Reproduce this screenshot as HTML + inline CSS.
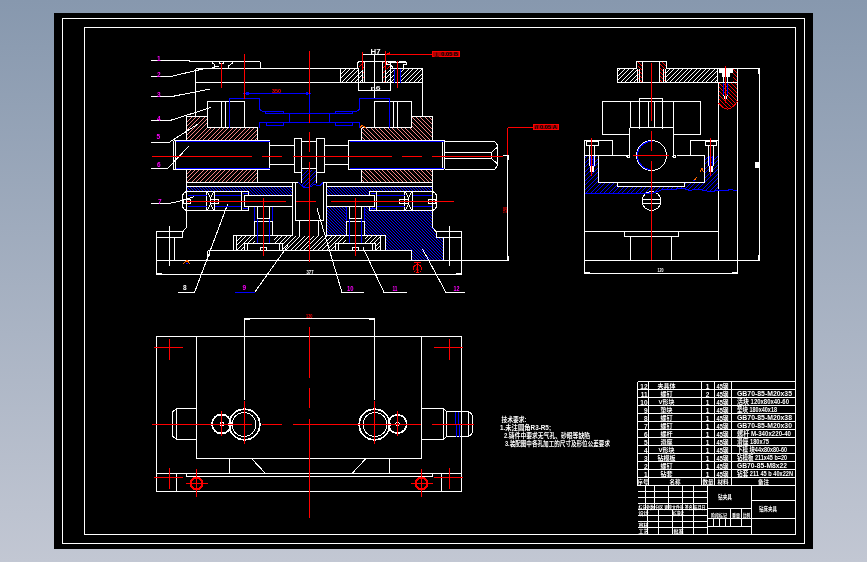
<!DOCTYPE html>
<html><head><meta charset="utf-8"><title>CAD</title>
<style>
html,body{margin:0;padding:0;width:867px;height:562px;overflow:hidden;background:linear-gradient(#8798ae,#c2c7d3)}
svg{position:absolute;left:0;top:0;display:block;will-change:transform;font-family:"Liberation Sans","Noto Sans CJK SC",sans-serif}
</style></head><body>
<svg width="867" height="562" viewBox="0 0 867 562" shape-rendering="crispEdges">
<defs>
<pattern id="hr" width="13" height="13" patternUnits="userSpaceOnUse"><path d="M0 0h1v1h-1zM4 0h1v1h-1zM9 0h1v1h-1zM3 1h1v1h-1zM8 1h1v1h-1zM12 1h1v1h-1zM2 2h1v1h-1zM7 2h1v1h-1zM11 2h1v1h-1zM1 3h1v1h-1zM6 3h1v1h-1zM10 3h1v1h-1zM0 4h1v1h-1zM5 4h1v1h-1zM9 4h1v1h-1zM4 5h1v1h-1zM8 5h1v1h-1zM12 5h1v1h-1zM3 6h1v1h-1zM7 6h1v1h-1zM11 6h1v1h-1zM2 7h1v1h-1zM6 7h1v1h-1zM10 7h1v1h-1zM1 8h1v1h-1zM5 8h1v1h-1zM9 8h1v1h-1zM0 9h1v1h-1zM4 9h1v1h-1zM8 9h1v1h-1zM3 10h1v1h-1zM7 10h1v1h-1zM12 10h1v1h-1zM2 11h1v1h-1zM6 11h1v1h-1zM11 11h1v1h-1zM1 12h1v1h-1zM5 12h1v1h-1zM10 12h1v1h-1z" fill="#f28484"/></pattern>
<pattern id="hrb" width="13" height="13" patternUnits="userSpaceOnUse"><path d="M0 0h1v1h-1zM4 0h1v1h-1zM9 0h1v1h-1zM1 1h1v1h-1zM5 1h1v1h-1zM10 1h1v1h-1zM2 2h1v1h-1zM6 2h1v1h-1zM11 2h1v1h-1zM3 3h1v1h-1zM7 3h1v1h-1zM12 3h1v1h-1zM0 4h1v1h-1zM4 4h1v1h-1zM8 4h1v1h-1zM1 5h1v1h-1zM5 5h1v1h-1zM9 5h1v1h-1zM2 6h1v1h-1zM6 6h1v1h-1zM10 6h1v1h-1zM3 7h1v1h-1zM7 7h1v1h-1zM11 7h1v1h-1zM4 8h1v1h-1zM8 8h1v1h-1zM12 8h1v1h-1zM0 9h1v1h-1zM5 9h1v1h-1zM9 9h1v1h-1zM1 10h1v1h-1zM6 10h1v1h-1zM10 10h1v1h-1zM2 11h1v1h-1zM7 11h1v1h-1zM11 11h1v1h-1zM3 12h1v1h-1zM8 12h1v1h-1zM12 12h1v1h-1z" fill="#f28484"/></pattern>
<pattern id="hR" width="4" height="4" patternUnits="userSpaceOnUse"><path d="M0 0h1v1h-1zM1 1h1v1h-1zM2 2h1v1h-1zM3 3h1v1h-1z" fill="#f00"/></pattern>
<pattern id="hRf" width="5" height="5" patternUnits="userSpaceOnUse"><path d="M0 0h1v1h-1zM4 1h1v1h-1zM3 2h1v1h-1zM2 3h1v1h-1zM1 4h1v1h-1z" fill="#f00"/></pattern>
<pattern id="hb" width="3" height="3" patternUnits="userSpaceOnUse"><path d="M0 0h1v1h-1zM1 1h1v1h-1zM2 2h1v1h-1z" fill="#00f"/></pattern>
<pattern id="hbf" width="9" height="9" patternUnits="userSpaceOnUse"><path d="M0 0h1v1h-1zM4 0h1v1h-1zM3 1h1v1h-1zM8 1h1v1h-1zM2 2h1v1h-1zM7 2h1v1h-1zM1 3h1v1h-1zM6 3h1v1h-1zM0 4h1v1h-1zM5 4h1v1h-1zM4 5h1v1h-1zM8 5h1v1h-1zM3 6h1v1h-1zM7 6h1v1h-1zM2 7h1v1h-1zM6 7h1v1h-1zM1 8h1v1h-1zM5 8h1v1h-1z" fill="#00f"/></pattern>
<pattern id="hw" width="9" height="9" patternUnits="userSpaceOnUse"><path d="M0 0h1v1h-1zM4 0h1v1h-1zM3 1h1v1h-1zM8 1h1v1h-1zM2 2h1v1h-1zM7 2h1v1h-1zM1 3h1v1h-1zM6 3h1v1h-1zM0 4h1v1h-1zM5 4h1v1h-1zM4 5h1v1h-1zM8 5h1v1h-1zM3 6h1v1h-1zM7 6h1v1h-1zM2 7h1v1h-1zM6 7h1v1h-1zM1 8h1v1h-1zM5 8h1v1h-1z" fill="#fff"/></pattern>
</defs>
<rect x="54" y="13" width="759" height="536" fill="#000"/>
<rect x="62.5" y="18.5" width="742" height="525" stroke="#fff" fill="none"/>
<rect x="84.5" y="27.5" width="711" height="507" stroke="#fff" fill="none"/>
<!--FRONT VIEW-->
<path d="M186.5 116.5 H207.5 V127.5 H257.5 V140.5 H186.5 Z" fill="url(#hr)" stroke="none"/>
<path d="M186.5 169.5 H257.5 V182.5 H186.5 Z" fill="url(#hr)" stroke="none"/>
<path d="M361.5 127.5 H411.5 V116.5 H432.5 V140.5 H361.5 Z" fill="url(#hrb)" stroke="none"/>
<path d="M361.5 169.5 H432.5 V182.5 H361.5 Z" fill="url(#hrb)" stroke="none"/>
<path d="M340.5 68.5 H358.5 V82.5 H340.5 Z" fill="url(#hw)" stroke="none"/>
<path d="M390.5 68.5 H394.5 V82.5 H390.5 Z" fill="url(#hw)" stroke="none"/>
<path d="M400.5 68.5 H422.5 V82.5 H400.5 Z" fill="url(#hw)" stroke="none"/>
<path d="M358.5 62 H364.5 V82.5 H362.5 V68.5 H358.5 Z" fill="url(#hRf)" stroke="none"/>
<path d="M358.5 68.5 H362.5 V82.5 H358.5 Z" fill="url(#hw)" stroke="none"/>
<path d="M382.5 62 H390 V68.5 H385.5 V82.5 H382.5 Z" fill="url(#hRf)" stroke="none"/>
<path d="M385.5 68.5 H390.5 V82.5 H385.5 Z" fill="url(#hw)" stroke="none"/>
<path d="M186.5 186.5 H292.5 V195.5 H248.5 V191.5 H186.5 Z" fill="url(#hb)" stroke="none"/>
<path d="M326.5 186.5 H432.5 V227.5 L436.5 231.5 V237.5 H443.5 V260.5 H411.5 V250.5 H385.5 V235.5 H364.5 V206.5 H374.5 V210.5 H432.5 V191.5 H369.5 V195.5 H326.5 Z" fill="url(#hb)" stroke="none"/>
<path d="M326.5 206.5 H346.5 V235.5 H326.5 Z" fill="url(#hb)" stroke="none"/>
<path d="M301.5 169.5 H316.5 V182.5 H323 L320 186 L314 184.5 L309.5 187.5 L304 187.5 L298.5 182.5 H301.5 Z" fill="url(#hbf)" stroke="none"/>
<path d="M236.5 235.5 H254.5 V243.5 H244.5 V250.5 H236.5 Z" fill="url(#hw)" stroke="none"/>
<path d="M273.5 235.5 H345.5 V243.5 H335.5 V250.5 H282.5 V243.5 H273.5 Z" fill="url(#hw)" stroke="none"/>
<path d="M364.5 235.5 H380.5 V250.5 H375.5 V243.5 H364.5 Z" fill="url(#hw)" stroke="none"/>
<line x1="151" y1="60.5" x2="189.5" y2="60.5" stroke="#fff" stroke-width="1"/>
<path d="M189 61.5 H258.5 Q260.5 61.5 260.5 63.5 V68.5" stroke="#fff" fill="none" stroke-width="1"/>
<path d="M212.5 61.5 V63 L214.5 64.5 V67 L210.5 68.5 M232.5 61.5 V63 L230.5 64.5 L228.5 66 V68 L230 68.5 M215 66.5 H219" stroke="#fff" fill="none" stroke-width="1"/>
<rect x="219.5" y="61.5" width="4.0" height="2.0" stroke="#fff" fill="none"/>
<line x1="195.5" y1="68.5" x2="358.5" y2="68.5" stroke="#fff" stroke-width="1"/>
<line x1="195.5" y1="82.5" x2="358.5" y2="82.5" stroke="#fff" stroke-width="1"/>
<line x1="195.5" y1="68.5" x2="195.5" y2="116.5" stroke="#fff" stroke-width="1"/>
<line x1="390.5" y1="68.5" x2="422.5" y2="68.5" stroke="#fff" stroke-width="1"/>
<line x1="390.5" y1="82.5" x2="422.5" y2="82.5" stroke="#fff" stroke-width="1"/>
<line x1="340.5" y1="68.5" x2="340.5" y2="82.5" stroke="#fff" stroke-width="1"/>
<line x1="422.5" y1="68.5" x2="422.5" y2="116.5" stroke="#fff" stroke-width="1"/>
<path d="M357.5 68.5 V64 Q357.5 61.5 360 61.5 H387.5 Q390.5 61.5 390.5 64 V68.5" stroke="#fff" fill="none" stroke-width="1"/>
<line x1="358.5" y1="68.5" x2="358.5" y2="90.5" stroke="#fff" stroke-width="1"/>
<line x1="390.5" y1="68.5" x2="390.5" y2="90.5" stroke="#fff" stroke-width="1"/>
<line x1="364.5" y1="61.5" x2="364.5" y2="82.5" stroke="#fff" stroke-width="1"/>
<line x1="382.5" y1="61.5" x2="382.5" y2="82.5" stroke="#fff" stroke-width="1"/>
<line x1="358.5" y1="90.5" x2="390.5" y2="90.5" stroke="#fff" stroke-width="1"/>
<line x1="374.5" y1="54" x2="374.5" y2="98.5" stroke="#fff" stroke-width="1"/>
<line x1="362.5" y1="54.5" x2="385.5" y2="54.5" stroke="#fff" stroke-width="1"/>
<text x="370.5" y="53.5" fill="#fff" font-size="7" text-anchor="start" font-weight="bold" textLength="10" lengthAdjust="spacingAndGlyphs">H7</text>
<text x="370.5" y="89.5" fill="#fff" font-size="6" text-anchor="start" font-weight="bold" textLength="10" lengthAdjust="spacingAndGlyphs">n6</text>
<path d="M386.5 64.5 V63.5 Q386.5 61.5 388.5 61.5 H395.5 L397.5 63.5 L399.5 61.5 H404.5 Q406.5 61.5 406.5 63.5 V64.5 H403.5 V68.5 M386.5 64.5 H390.5 L393.5 68.5" stroke="#fff" fill="none" stroke-width="1"/>
<line x1="388" y1="62.5" x2="396" y2="62.5" stroke="#fff" stroke-width="1"/>
<line x1="399" y1="62.5" x2="405.5" y2="62.5" stroke="#fff" stroke-width="1"/>
<line x1="358.5" y1="82.5" x2="390.5" y2="82.5" stroke="#fff" stroke-width="1"/>
<line x1="362.5" y1="68.5" x2="362.5" y2="82.5" stroke="#fff" stroke-width="1"/>
<line x1="385.5" y1="68.5" x2="385.5" y2="82.5" stroke="#fff" stroke-width="1"/>
<line x1="151" y1="76.5" x2="170.5" y2="76.5" stroke="#fff" stroke-width="1"/>
<line x1="170.5" y1="76.5" x2="205" y2="68.5" stroke="#fff" stroke-width="1"/>
<line x1="151" y1="96.5" x2="172" y2="96.5" stroke="#fff" stroke-width="1"/>
<line x1="172" y1="96.5" x2="210" y2="89" stroke="#fff" stroke-width="1"/>
<line x1="151" y1="120.5" x2="170" y2="120.5" stroke="#fff" stroke-width="1"/>
<line x1="170" y1="120.5" x2="211" y2="107.5" stroke="#fff" stroke-width="1"/>
<line x1="151" y1="142.5" x2="169" y2="142.5" stroke="#fff" stroke-width="1"/>
<line x1="169" y1="142.5" x2="198" y2="124" stroke="#fff" stroke-width="1"/>
<line x1="151" y1="168.5" x2="167.5" y2="168.5" stroke="#fff" stroke-width="1"/>
<line x1="167.5" y1="168.5" x2="189" y2="146" stroke="#fff" stroke-width="1"/>
<line x1="151" y1="203.5" x2="168" y2="203.5" stroke="#fff" stroke-width="1"/>
<path d="M168 203.5 Q180 202 194 196.5" stroke="#fff" fill="none" stroke-width="1"/>
<rect x="207.5" y="101.5" width="37.0" height="26.0" stroke="#fff" fill="none"/>
<line x1="221.5" y1="101.5" x2="221.5" y2="127.5" stroke="#fff" stroke-width="1"/>
<line x1="225.5" y1="101.5" x2="225.5" y2="127.5" stroke="#fff" stroke-width="1"/>
<rect x="374.5" y="101.5" width="37.0" height="26.0" stroke="#fff" fill="none"/>
<line x1="393.5" y1="101.5" x2="393.5" y2="127.5" stroke="#fff" stroke-width="1"/>
<line x1="397.5" y1="101.5" x2="397.5" y2="127.5" stroke="#fff" stroke-width="1"/>
<path d="M186.5 140.5 V116.5 H207.5" stroke="#fff" fill="none" stroke-width="1"/>
<line x1="186.5" y1="169.5" x2="186.5" y2="227.5" stroke="#fff" stroke-width="1"/>
<line x1="244.5" y1="127.5" x2="257.5" y2="127.5" stroke="#fff" stroke-width="1"/>
<line x1="257.5" y1="127.5" x2="257.5" y2="140.5" stroke="#fff" stroke-width="1"/>
<line x1="257.5" y1="169.5" x2="257.5" y2="182.5" stroke="#fff" stroke-width="1"/>
<line x1="361.5" y1="127.5" x2="374.5" y2="127.5" stroke="#fff" stroke-width="1"/>
<line x1="361.5" y1="127.5" x2="361.5" y2="140.5" stroke="#fff" stroke-width="1"/>
<line x1="361.5" y1="169.5" x2="361.5" y2="182.5" stroke="#fff" stroke-width="1"/>
<path d="M411.5 116.5 H432.5 V140.5" stroke="#fff" fill="none" stroke-width="1"/>
<line x1="432.5" y1="169.5" x2="432.5" y2="227.5" stroke="#fff" stroke-width="1"/>
<line x1="186.5" y1="182.5" x2="298.5" y2="182.5" stroke="#fff" stroke-width="1"/>
<line x1="323" y1="182.5" x2="432.5" y2="182.5" stroke="#fff" stroke-width="1"/>
<line x1="186.5" y1="186.5" x2="292.5" y2="186.5" stroke="#fff" stroke-width="1"/>
<line x1="326.5" y1="186.5" x2="432.5" y2="186.5" stroke="#fff" stroke-width="1"/>
<path d="M175 140.5 H269.5 V169.5 H175 Q173.5 169.5 173.5 168 V142 Q173.5 140.5 175 140.5" stroke="#fff" fill="none" stroke-width="1"/>
<line x1="175.5" y1="140.5" x2="175.5" y2="169.5" stroke="#fff" stroke-width="1"/>
<line x1="269.5" y1="145.5" x2="294.5" y2="145.5" stroke="#fff" stroke-width="1"/>
<line x1="269.5" y1="164.5" x2="294.5" y2="164.5" stroke="#fff" stroke-width="1"/>
<rect x="294.5" y="138.5" width="7.0" height="34.0" stroke="#fff" fill="none"/>
<rect x="316.5" y="138.5" width="8.0" height="34.0" stroke="#fff" fill="none"/>
<line x1="301.5" y1="141.5" x2="316.5" y2="141.5" stroke="#fff" stroke-width="1"/>
<line x1="301.5" y1="168.5" x2="316.5" y2="168.5" stroke="#fff" stroke-width="1"/>
<line x1="324.5" y1="145.5" x2="348.5" y2="145.5" stroke="#fff" stroke-width="1"/>
<line x1="324.5" y1="164.5" x2="348.5" y2="164.5" stroke="#fff" stroke-width="1"/>
<path d="M348.5 140.5 H443 Q444.5 140.5 444.5 142 V168 Q444.5 169.5 443 169.5 H348.5 Z" stroke="#fff" fill="none" stroke-width="1"/>
<line x1="442.5" y1="140.5" x2="442.5" y2="169.5" stroke="#fff" stroke-width="1"/>
<path d="M444.5 141.5 H494.5 L497.5 145 V165.5 L494.5 169.5 H444.5" stroke="#fff" fill="none" stroke-width="1"/>
<path d="M444.5 152.5 H491.5 V158.5 H444.5 M491.5 152.5 L497.5 147 M491.5 158.5 L497.5 164" stroke="#fff" fill="none" stroke-width="1"/>
<line x1="301.5" y1="172.5" x2="301.5" y2="182.5" stroke="#fff" stroke-width="1"/>
<line x1="316.5" y1="172.5" x2="316.5" y2="182.5" stroke="#fff" stroke-width="1"/>
<line x1="292.5" y1="182.5" x2="292.5" y2="235.5" stroke="#fff" stroke-width="1"/>
<line x1="295.5" y1="182.5" x2="295.5" y2="220.5" stroke="#fff" stroke-width="1"/>
<line x1="323.5" y1="182.5" x2="323.5" y2="220.5" stroke="#fff" stroke-width="1"/>
<line x1="326.5" y1="182.5" x2="326.5" y2="235.5" stroke="#fff" stroke-width="1"/>
<line x1="295.5" y1="220.5" x2="323.5" y2="220.5" stroke="#fff" stroke-width="1"/>
<line x1="299.5" y1="220.5" x2="299.5" y2="235.5" stroke="#fff" stroke-width="1"/>
<line x1="318.5" y1="220.5" x2="318.5" y2="235.5" stroke="#fff" stroke-width="1"/>
<path d="M186.5 191.5 H248.5 V195.5 M248.5 206.5 V210.5 H186.5 M186.5 191.5 Q182.5 193 182.5 196.5 V205.5 Q182.5 209 186.5 210.5" stroke="#fff" fill="none" stroke-width="1"/>
<rect x="183.5" y="199.5" width="7.0" height="4.0" stroke="#fff" fill="none"/>
<line x1="206.5" y1="191.5" x2="206.5" y2="210.5" stroke="#fff" stroke-width="1"/>
<line x1="214.5" y1="191.5" x2="214.5" y2="210.5" stroke="#fff" stroke-width="1"/>
<path d="M206.5 191.5 Q210.5 195 210.5 201 Q210.5 207 206.5 210.5 M214.5 191.5 Q210.5 195 210.5 201 Q210.5 207 214.5 210.5" stroke="#fff" fill="none" stroke-width="1"/>
<rect x="210.5" y="199.5" width="8.0" height="4.0" stroke="#fff" fill="none"/>
<line x1="241.5" y1="191.5" x2="241.5" y2="210.5" stroke="#fff" stroke-width="1"/>
<path d="M292.5 195.5 H244.5 V206.5 H292.5" stroke="#fff" fill="none" stroke-width="1"/>
<path d="M432.5 191.5 H369.5 V195.5 M369.5 206.5 V210.5 H432.5 M432.5 191.5 Q436.5 193 436.5 196.5 V205.5 Q436.5 209 432.5 210.5" stroke="#fff" fill="none" stroke-width="1"/>
<rect x="428.5" y="199.5" width="7.0" height="4.0" stroke="#fff" fill="none"/>
<line x1="404.5" y1="191.5" x2="404.5" y2="210.5" stroke="#fff" stroke-width="1"/>
<line x1="412.5" y1="191.5" x2="412.5" y2="210.5" stroke="#fff" stroke-width="1"/>
<path d="M404.5 191.5 Q408.5 195 408.5 201 Q408.5 207 404.5 210.5 M412.5 191.5 Q408.5 195 408.5 201 Q408.5 207 412.5 210.5" stroke="#fff" fill="none" stroke-width="1"/>
<rect x="399.5" y="199.5" width="9.0" height="4.0" stroke="#fff" fill="none"/>
<line x1="376.5" y1="191.5" x2="376.5" y2="210.5" stroke="#fff" stroke-width="1"/>
<path d="M326.5 195.5 H374.5 V206.5 H326.5" stroke="#fff" fill="none" stroke-width="1"/>
<path d="M257.5 206.5 V218.5 H269.5 V206.5" stroke="#fff" fill="none" stroke-width="1"/>
<rect x="254.5" y="221.5" width="18.0" height="14.0" stroke="#fff" fill="none"/>
<rect x="260.5" y="247.5" width="6.0" height="3.0" stroke="#fff" fill="none"/>
<path d="M349.5 206.5 V218.5 H361.5 V206.5" stroke="#fff" fill="none" stroke-width="1"/>
<rect x="346.5" y="221.5" width="18.0" height="14.0" stroke="#fff" fill="none"/>
<rect x="352.5" y="247.5" width="6.0" height="3.0" stroke="#fff" fill="none"/>
<path d="M233.5 250.5 V235.5 H254 M273 235.5 H292.5 M326.5 235.5 H346 M365 235.5 H385.5 V250.5" stroke="#fff" fill="none" stroke-width="1"/>
<line x1="236.5" y1="235.5" x2="236.5" y2="250.5" stroke="#fff" stroke-width="1"/>
<line x1="380.5" y1="235.5" x2="380.5" y2="250.5" stroke="#fff" stroke-width="1"/>
<path d="M244.5 250.5 V243.5 H282.5 V250.5 M247.5 243.5 V250.5 M279.5 243.5 V250.5" stroke="#fff" fill="none" stroke-width="1"/>
<path d="M335.5 250.5 V243.5 H375.5 V250.5 M338.5 243.5 V250.5 M372.5 243.5 V250.5" stroke="#fff" fill="none" stroke-width="1"/>
<line x1="207.5" y1="250.5" x2="411.5" y2="250.5" stroke="#fff" stroke-width="1"/>
<line x1="207.5" y1="250.5" x2="207.5" y2="260.5" stroke="#fff" stroke-width="1"/>
<line x1="209.5" y1="250.5" x2="209.5" y2="256" stroke="#fff" stroke-width="1"/>
<line x1="411.5" y1="250.5" x2="411.5" y2="260.5" stroke="#fff" stroke-width="1"/>
<path d="M186.5 227.5 L182.5 232" stroke="#fff" fill="none" stroke-width="1"/>
<path d="M432.5 227.5 L436.5 232" stroke="#fff" fill="none" stroke-width="1"/>
<rect x="156.5" y="231.5" width="26.0" height="6.0" stroke="#fff" fill="none"/>
<line x1="156.5" y1="237.5" x2="156.5" y2="274.5" stroke="#fff" stroke-width="1"/>
<line x1="174.5" y1="237.5" x2="174.5" y2="260.5" stroke="#fff" stroke-width="1"/>
<line x1="169.5" y1="226" x2="169.5" y2="265.5" stroke="#fff" stroke-width="1"/>
<rect x="436.5" y="231.5" width="25.0" height="6.0" stroke="#fff" fill="none"/>
<line x1="461.5" y1="237.5" x2="461.5" y2="274.5" stroke="#fff" stroke-width="1"/>
<line x1="443.5" y1="237.5" x2="443.5" y2="260.5" stroke="#fff" stroke-width="1"/>
<line x1="449.5" y1="226" x2="449.5" y2="265.5" stroke="#fff" stroke-width="1"/>
<line x1="156.5" y1="260.5" x2="508.5" y2="260.5" stroke="#fff" stroke-width="1"/>
<line x1="156.5" y1="274.5" x2="461.5" y2="274.5" stroke="#fff" stroke-width="1"/>
<line x1="156.5" y1="273.5" x2="162" y2="273.5" stroke="#fff" stroke-width="1"/>
<line x1="456" y1="273.5" x2="461.5" y2="273.5" stroke="#fff" stroke-width="1"/>
<line x1="507.5" y1="155.5" x2="507.5" y2="260.5" stroke="#fff" stroke-width="1"/>
<line x1="503" y1="155.5" x2="507.5" y2="155.5" stroke="#fff" stroke-width="1"/>
<line x1="508.5" y1="155" x2="508.5" y2="160" stroke="#fff" stroke-width="1"/>
<line x1="508.5" y1="256" x2="508.5" y2="260.5" stroke="#fff" stroke-width="1"/>
<line x1="227.5" y1="204.5" x2="194.5" y2="292.5" stroke="#fff" stroke-width="1"/>
<line x1="178" y1="292.5" x2="194.5" y2="292.5" stroke="#fff" stroke-width="1"/>
<line x1="288" y1="245.5" x2="254.5" y2="292.5" stroke="#fff" stroke-width="1"/>
<line x1="317" y1="208.5" x2="342" y2="292.5" stroke="#fff" stroke-width="1"/>
<line x1="342" y1="292.5" x2="364" y2="292.5" stroke="#fff" stroke-width="1"/>
<line x1="363" y1="247.5" x2="384" y2="292.5" stroke="#fff" stroke-width="1"/>
<line x1="384" y1="292.5" x2="407" y2="292.5" stroke="#fff" stroke-width="1"/>
<line x1="422.5" y1="249" x2="446" y2="292.5" stroke="#fff" stroke-width="1"/>
<line x1="446" y1="292.5" x2="465" y2="292.5" stroke="#fff" stroke-width="1"/>
<text x="306.5" y="273.8" fill="#fff" font-size="4.5" text-anchor="start" font-weight="bold" textLength="7" lengthAdjust="spacingAndGlyphs">377</text>
<line x1="244.5" y1="93.5" x2="309.5" y2="93.5" stroke="#00f" stroke-width="1"/>
<line x1="309.5" y1="93.5" x2="309.5" y2="113.5" stroke="#00f" stroke-width="1"/>
<path d="M244.5 93.5 L248 92.5 L248 94.5 Z" stroke="#00f" fill="#00f" stroke-width="1"/>
<path d="M309.5 93.5 L306 92.5 L306 94.5 Z" stroke="#00f" fill="#00f" stroke-width="1"/>
<path d="M229.5 127.5 V98.5 H259.5 V108 Q259.5 111.5 265.5 111.5 H283.5 V113.5 H335.5 V111.5 H353 Q359.5 111.5 359.5 108 V98.5 H389.5 V127.5" stroke="#00f" fill="none" stroke-width="1"/>
<path d="M265.5 111.5 V113.5 H283.5 M335.5 113.5 H352.5 V111.5" stroke="#00f" fill="none" stroke-width="1"/>
<line x1="289.5" y1="113.5" x2="289.5" y2="122.5" stroke="#00f" stroke-width="1"/>
<line x1="329.5" y1="113.5" x2="329.5" y2="122.5" stroke="#00f" stroke-width="1"/>
<path d="M259.5 128 V122.5 H359.5 V128" stroke="#00f" fill="none" stroke-width="1"/>
<path d="M266.5 122.5 V125.5 H283.5 V122.5 M335.5 122.5 V125.5 H352.5 V122.5" stroke="#00f" fill="none" stroke-width="1"/>
<line x1="175.5" y1="141.5" x2="269.5" y2="141.5" stroke="#00f" stroke-width="1"/>
<line x1="175.5" y1="168.5" x2="269.5" y2="168.5" stroke="#00f" stroke-width="1"/>
<line x1="349.5" y1="141.5" x2="444" y2="141.5" stroke="#00f" stroke-width="1"/>
<line x1="349.5" y1="168.5" x2="444" y2="168.5" stroke="#00f" stroke-width="1"/>
<path d="M298.5 182.5 L304 187.5 L309.5 187.5 L314 184.5 L320 186 L323 182.5" stroke="#00f" fill="none" stroke-width="1"/>
<line x1="187.5" y1="195.5" x2="206.5" y2="195.5" stroke="#00f" stroke-width="1"/>
<line x1="214.5" y1="195.5" x2="241" y2="195.5" stroke="#00f" stroke-width="1"/>
<line x1="187.5" y1="206.5" x2="206.5" y2="206.5" stroke="#00f" stroke-width="1"/>
<line x1="214.5" y1="206.5" x2="241" y2="206.5" stroke="#00f" stroke-width="1"/>
<line x1="243" y1="193.5" x2="248" y2="193.5" stroke="#00f" stroke-width="1"/>
<line x1="243" y1="208.5" x2="248" y2="208.5" stroke="#00f" stroke-width="1"/>
<line x1="377" y1="195.5" x2="404.5" y2="195.5" stroke="#00f" stroke-width="1"/>
<line x1="412.5" y1="195.5" x2="431.5" y2="195.5" stroke="#00f" stroke-width="1"/>
<line x1="377" y1="206.5" x2="404.5" y2="206.5" stroke="#00f" stroke-width="1"/>
<line x1="412.5" y1="206.5" x2="431.5" y2="206.5" stroke="#00f" stroke-width="1"/>
<line x1="371" y1="193.5" x2="376" y2="193.5" stroke="#00f" stroke-width="1"/>
<line x1="371" y1="208.5" x2="376" y2="208.5" stroke="#00f" stroke-width="1"/>
<line x1="254.5" y1="206.5" x2="254.5" y2="220.5" stroke="#00f" stroke-width="1"/>
<line x1="272.5" y1="206.5" x2="272.5" y2="220.5" stroke="#00f" stroke-width="1"/>
<line x1="257.5" y1="218.5" x2="257.5" y2="243" stroke="#00f" stroke-width="1"/>
<line x1="269.5" y1="218.5" x2="269.5" y2="243" stroke="#00f" stroke-width="1"/>
<line x1="346.5" y1="206.5" x2="346.5" y2="220.5" stroke="#00f" stroke-width="1"/>
<line x1="364.5" y1="206.5" x2="364.5" y2="220.5" stroke="#00f" stroke-width="1"/>
<line x1="349.5" y1="218.5" x2="349.5" y2="243" stroke="#00f" stroke-width="1"/>
<line x1="361.5" y1="218.5" x2="361.5" y2="243" stroke="#00f" stroke-width="1"/>
<line x1="394.5" y1="68.5" x2="394.5" y2="82.5" stroke="#00f" stroke-width="1"/>
<line x1="400.5" y1="68.5" x2="400.5" y2="82.5" stroke="#00f" stroke-width="1"/>
<line x1="235" y1="292.5" x2="254.5" y2="292.5" stroke="#00f" stroke-width="1"/>
<line x1="221.5" y1="62.5" x2="221.5" y2="88" stroke="#f00" stroke-width="1"/>
<line x1="244.5" y1="54" x2="244.5" y2="98.5" stroke="#f00" stroke-width="1"/>
<line x1="309.5" y1="51" x2="309.5" y2="93.5" stroke="#f00" stroke-width="1"/>
<line x1="309.5" y1="113.5" x2="309.5" y2="122.5" stroke="#f00" stroke-width="1"/>
<line x1="309.5" y1="132" x2="309.5" y2="152" stroke="#f00" stroke-width="1"/>
<line x1="309.5" y1="162" x2="309.5" y2="262" stroke="#f00" stroke-width="1"/>
<line x1="362.5" y1="52" x2="362.5" y2="69.5" stroke="#f00" stroke-width="1"/>
<line x1="385.5" y1="51" x2="385.5" y2="69.5" stroke="#f00" stroke-width="1"/>
<line x1="397.5" y1="61" x2="397.5" y2="87.5" stroke="#f00" stroke-width="1"/>
<line x1="385.5" y1="54.5" x2="432.5" y2="54.5" stroke="#f00" stroke-width="1"/>
<path d="M385.5 54.5 L389 53.2 L389 54.5 Z" stroke="#f00" fill="#f00" stroke-width="1"/>
<rect x="432.5" y="51.5" width="27" height="5" fill="#f00" fill-opacity="0.7" stroke="#f00"/>
<text x="434" y="56" fill="#000" font-size="5" text-anchor="start" font-weight="bold" textLength="24" lengthAdjust="spacingAndGlyphs">⊥ 0.05 B</text>
<line x1="152" y1="156.5" x2="252" y2="156.5" stroke="#f00" stroke-width="1"/>
<line x1="262" y1="156.5" x2="282" y2="156.5" stroke="#f00" stroke-width="1"/>
<line x1="292.5" y1="156.5" x2="391.5" y2="156.5" stroke="#f00" stroke-width="1"/>
<line x1="402" y1="156.5" x2="421.5" y2="156.5" stroke="#f00" stroke-width="1"/>
<line x1="432" y1="156.5" x2="503" y2="156.5" stroke="#f00" stroke-width="1"/>
<line x1="186.5" y1="201.5" x2="286" y2="201.5" stroke="#f00" stroke-width="1"/>
<line x1="296" y1="201.5" x2="316" y2="201.5" stroke="#f00" stroke-width="1"/>
<line x1="331" y1="201.5" x2="454" y2="201.5" stroke="#f00" stroke-width="1"/>
<line x1="263.5" y1="198" x2="263.5" y2="255.5" stroke="#f00" stroke-width="1"/>
<line x1="355.5" y1="198" x2="355.5" y2="255.5" stroke="#f00" stroke-width="1"/>
<line x1="507.5" y1="127.5" x2="507.5" y2="154.5" stroke="#f00" stroke-width="1"/>
<line x1="507.5" y1="127.5" x2="533.5" y2="127.5" stroke="#f00" stroke-width="1"/>
<rect x="533.5" y="124.5" width="25" height="5" fill="#f00" fill-opacity="0.7" stroke="#f00"/>
<text x="535" y="129" fill="#000" font-size="5" text-anchor="start" font-weight="bold" textLength="22" lengthAdjust="spacingAndGlyphs">// 0.05 A</text>
<text x="503.5" y="210" fill="#f00" font-size="4.5" text-anchor="start" font-weight="bold" textLength="6" lengthAdjust="spacingAndGlyphs" transform="rotate(-90 506.5 210)">150</text>
<text x="272" y="92.7" fill="#f00" font-size="5" text-anchor="start" font-weight="bold" textLength="9" lengthAdjust="spacingAndGlyphs">350</text>
<circle cx="417.5" cy="268.5" r="4" stroke="#f00" fill="none" stroke-width="1"/>
<line x1="414" y1="262.5" x2="421" y2="262.5" stroke="#f00" stroke-width="1"/>
<line x1="417.5" y1="262.5" x2="417.5" y2="273" stroke="#f00" stroke-width="1"/>
<text x="415.6" y="270.5" fill="#f00" font-size="5" text-anchor="start">A</text>
<path d="M183 264 L187 260.5 L190 264" stroke="#f60" fill="none" stroke-width="1"/>
<line x1="186" y1="263.5" x2="188" y2="263.5" stroke="#00f" stroke-width="1"/>
<path d="M360 128 L362 125 L366 128" stroke="#f60" fill="none" stroke-width="1"/>
<text x="157" y="61" fill="#f0f" font-size="6.5" text-anchor="start" font-weight="bold">1</text>
<text x="157" y="77" fill="#f0f" font-size="6.5" text-anchor="start" font-weight="bold">2</text>
<text x="157" y="97" fill="#f0f" font-size="6.5" text-anchor="start" font-weight="bold">3</text>
<text x="157" y="121" fill="#f0f" font-size="6.5" text-anchor="start" font-weight="bold">4</text>
<text x="156.5" y="138.5" fill="#f0f" font-size="6.5" text-anchor="start" font-weight="bold">5</text>
<text x="157" y="167" fill="#f0f" font-size="6.5" text-anchor="start" font-weight="bold">6</text>
<text x="158" y="203.5" fill="#f0f" font-size="6.5" text-anchor="start" font-weight="bold">7</text>
<text x="183" y="290" fill="#fff" font-size="6.5" text-anchor="start" font-weight="bold">8</text>
<text x="242.5" y="290" fill="#f0f" font-size="6.5" text-anchor="start" font-weight="bold">9</text>
<text x="347" y="290.5" fill="#f0f" font-size="6.5" text-anchor="start" font-weight="bold" textLength="6.5" lengthAdjust="spacingAndGlyphs">10</text>
<text x="392.5" y="290.5" fill="#f0f" font-size="6.5" text-anchor="start" font-weight="bold" textLength="5" lengthAdjust="spacingAndGlyphs">11</text>
<text x="453.5" y="290.5" fill="#f0f" font-size="6.5" text-anchor="start" font-weight="bold" textLength="6" lengthAdjust="spacingAndGlyphs">12</text>
<!--SIDE VIEW-->
<path d="M617.5 68.5 H637.5 V82.5 H617.5 Z" fill="url(#hw)" stroke="none"/>
<path d="M665.5 68.5 H717.5 V82.5 H665.5 Z" fill="url(#hw)" stroke="none"/>
<path d="M637.5 62 H642.5 V82.5 H637.5 Z" fill="url(#hR)" stroke="none"/>
<path d="M659.5 62 H665.5 V82.5 H659.5 Z" fill="url(#hR)" stroke="none"/>
<path d="M733 68.5 H737.5 V82.5 H733 Z" fill="url(#hR)" stroke="none"/>
<path d="M718.5 82.5 H737.5 V101 Q728 116 718.5 103 Z" fill="url(#hR)" stroke="none"/>
<path d="M584.5 155.5 H598.5 V182.5 H617.5 V186.5 H684.5 V182.5 H704.5 V155.5 H718.5 V190 L712 192 L705 190.5 L697 189 L690 190.5 L682 188 L672 190 L664 189 L656 192 L651 193.5 H584.5 Z" fill="url(#hbf)" stroke="none"/>
<path d="M636.5 68.5 H617.5 V82.5 H737.5 V68.5 H666.5" stroke="#fff" fill="none" stroke-width="1"/>
<path d="M636.5 68.5 V61.5 H666.5 V68.5" stroke="#fff" fill="none" stroke-width="1"/>
<line x1="637.5" y1="68.5" x2="637.5" y2="82.5" stroke="#fff" stroke-width="1"/>
<line x1="639.5" y1="68.5" x2="639.5" y2="82.5" stroke="#fff" stroke-width="1"/>
<line x1="642.5" y1="61.5" x2="642.5" y2="82.5" stroke="#fff" stroke-width="1"/>
<line x1="659.5" y1="61.5" x2="659.5" y2="82.5" stroke="#fff" stroke-width="1"/>
<line x1="663.5" y1="68.5" x2="663.5" y2="82.5" stroke="#fff" stroke-width="1"/>
<line x1="665.5" y1="68.5" x2="665.5" y2="82.5" stroke="#fff" stroke-width="1"/>
<line x1="717.5" y1="68.5" x2="717.5" y2="82.5" stroke="#fff" stroke-width="1"/>
<path d="M719 69.5 H732 V72 H719 Z M722 72 V76 H729 V72 M723.5 76 V82.5 M727.5 76 V82.5" stroke="#fff" fill="#fff" stroke-width="1"/>
<line x1="737.5" y1="68.5" x2="759.5" y2="68.5" stroke="#fff" stroke-width="1"/>
<line x1="759.5" y1="68.5" x2="759.5" y2="260.5" stroke="#fff" stroke-width="1"/>
<line x1="758.5" y1="68.5" x2="758.5" y2="74" stroke="#fff" stroke-width="1"/>
<line x1="758.5" y1="255" x2="758.5" y2="260.5" stroke="#fff" stroke-width="1"/>
<rect x="755.5" y="162.5" width="3.0" height="4.5" stroke="#fff" fill="#fff"/>
<line x1="737.5" y1="82.5" x2="737.5" y2="273.5" stroke="#fff" stroke-width="1"/>
<line x1="718.5" y1="82.5" x2="718.5" y2="260.5" stroke="#fff" stroke-width="1"/>
<path d="M723.5 95 L725.5 100 L727.5 95" stroke="#fff" fill="none" stroke-width="1"/>
<path d="M629.5 134.5 H602.5 V101.5 H700.5 V134.5 H673.5" stroke="#fff" fill="none" stroke-width="1"/>
<line x1="630.5" y1="101.5" x2="630.5" y2="127.5" stroke="#fff" stroke-width="1"/>
<line x1="673.5" y1="101.5" x2="673.5" y2="127.5" stroke="#fff" stroke-width="1"/>
<path d="M639.5 128.5 V98.5 H662.5 V128.5" stroke="#fff" fill="none" stroke-width="1"/>
<line x1="648.5" y1="101.5" x2="648.5" y2="127.5" stroke="#fff" stroke-width="1"/>
<line x1="654.5" y1="101.5" x2="654.5" y2="127.5" stroke="#fff" stroke-width="1"/>
<line x1="629.5" y1="127.5" x2="673.5" y2="127.5" stroke="#fff" stroke-width="1"/>
<line x1="629.5" y1="127.5" x2="629.5" y2="155" stroke="#fff" stroke-width="1"/>
<line x1="673.5" y1="127.5" x2="673.5" y2="155" stroke="#fff" stroke-width="1"/>
<circle cx="628.5" cy="156.5" r="1.5" stroke="#fff" fill="none" stroke-width="1"/>
<circle cx="674.5" cy="156.5" r="1.5" stroke="#fff" fill="none" stroke-width="1"/>
<circle cx="651.5" cy="155.5" r="15" stroke="#fff" fill="none" stroke-width="1"/>
<path d="M584.5 273.5 V140.5 H612.5 V155.5" stroke="#fff" fill="none" stroke-width="1"/>
<line x1="584.5" y1="155.5" x2="627" y2="155.5" stroke="#fff" stroke-width="1"/>
<line x1="677" y1="155.5" x2="704.5" y2="155.5" stroke="#fff" stroke-width="1"/>
<path d="M690.5 155.5 V140.5 H718.5" stroke="#fff" fill="none" stroke-width="1"/>
<path d="M598.5 155.5 V182.5 H704.5 V155.5" stroke="#fff" fill="none" stroke-width="1"/>
<path d="M617.5 182.5 V186.5 H684.5 V182.5" stroke="#fff" fill="none" stroke-width="1"/>
<rect x="586.5" y="141.5" width="12.0" height="4.0" stroke="#fff" fill="none"/>
<line x1="589.0" y1="145.5" x2="589.0" y2="166" stroke="#fff" stroke-width="1"/>
<line x1="594.5" y1="145.5" x2="594.5" y2="166" stroke="#fff" stroke-width="1"/>
<rect x="590.5" y="166.5" width="3.0" height="4.5" stroke="#fff" fill="#fff"/>
<rect x="705.5" y="141.5" width="11.0" height="4.0" stroke="#fff" fill="none"/>
<line x1="708.0" y1="145.5" x2="708.0" y2="166" stroke="#fff" stroke-width="1"/>
<line x1="713.5" y1="145.5" x2="713.5" y2="166" stroke="#fff" stroke-width="1"/>
<rect x="709.5" y="166.5" width="3.0" height="4.5" stroke="#fff" fill="#fff"/>
<circle cx="651.5" cy="201" r="9.5" stroke="#fff" fill="none" stroke-width="1"/>
<line x1="642.5" y1="199.5" x2="660.5" y2="199.5" stroke="#fff" stroke-width="1"/>
<line x1="642.5" y1="203.5" x2="660.5" y2="203.5" stroke="#fff" stroke-width="1"/>
<line x1="584.5" y1="231.5" x2="718.5" y2="231.5" stroke="#fff" stroke-width="1"/>
<path d="M624.5 231.5 V236.5 H678.5 V231.5 M630.5 236.5 V260.5 M671.5 236.5 V260.5" stroke="#fff" fill="none" stroke-width="1"/>
<line x1="584.5" y1="260.5" x2="759.5" y2="260.5" stroke="#fff" stroke-width="1"/>
<line x1="584.5" y1="273.5" x2="737.5" y2="273.5" stroke="#fff" stroke-width="1"/>
<line x1="584.5" y1="272.5" x2="590" y2="272.5" stroke="#fff" stroke-width="1"/>
<line x1="732" y1="272.5" x2="737.5" y2="272.5" stroke="#fff" stroke-width="1"/>
<text x="657.5" y="272.3" fill="#fff" font-size="4.5" text-anchor="start" font-weight="bold" textLength="6" lengthAdjust="spacingAndGlyphs">120</text>
<path d="M653 141.5 A14 14 0 0 0 650 169.5" stroke="#00f" fill="none" stroke-width="1.2"/>
<path d="M584.5 193.5 H651 L656 192 L664 189 L672 190 L682 188 L690 190.5 L697 189 L705 190.5 L712 192 L718.5 190 L726 190.5 L731 189.5 L737 191" stroke="#00f" fill="none" stroke-width="1"/>
<line x1="590.5" y1="155.5" x2="590.5" y2="166" stroke="#00f" stroke-width="1"/>
<line x1="593.5" y1="155.5" x2="593.5" y2="166" stroke="#00f" stroke-width="1"/>
<line x1="709.5" y1="155.5" x2="709.5" y2="166" stroke="#00f" stroke-width="1"/>
<line x1="712.5" y1="155.5" x2="712.5" y2="166" stroke="#00f" stroke-width="1"/>
<line x1="723.5" y1="82.5" x2="723.5" y2="95" stroke="#00f" stroke-width="1"/>
<line x1="727.5" y1="82.5" x2="727.5" y2="95" stroke="#00f" stroke-width="1"/>
<line x1="651.5" y1="63" x2="651.5" y2="120.5" stroke="#f00" stroke-width="1"/>
<line x1="651.5" y1="131" x2="651.5" y2="150.5" stroke="#f00" stroke-width="1"/>
<line x1="651.5" y1="160.5" x2="651.5" y2="260" stroke="#f00" stroke-width="1"/>
<line x1="632.5" y1="155.5" x2="668.5" y2="155.5" stroke="#f00" stroke-width="1"/>
<line x1="591.5" y1="138" x2="591.5" y2="176" stroke="#f00" stroke-width="1"/>
<line x1="710.5" y1="138" x2="710.5" y2="176" stroke="#f00" stroke-width="1"/>
<line x1="725.5" y1="65.5" x2="725.5" y2="103" stroke="#f00" stroke-width="1"/>
<path d="M718.5 103 Q728 116 737.5 101" stroke="#f00" fill="none" stroke-width="1"/>
<path d="M694 181 L697 177 M700 172 L702 168 L703.5 172" stroke="#f60" fill="none" stroke-width="1"/>
<path d="M692.5 180 H695" stroke="#00f" fill="none" stroke-width="1"/>
<!--TOP VIEW-->
<rect x="156.5" y="336.5" width="305.0" height="155.0" stroke="#fff" fill="none"/>
<path d="M196.5 336.5 V458.5 H421.5 V336.5" stroke="#fff" fill="none" stroke-width="1"/>
<path d="M244.5 400 V318.5 H374.5 V400" stroke="#fff" fill="none" stroke-width="1"/>
<line x1="244.5" y1="319.5" x2="250" y2="319.5" stroke="#fff" stroke-width="1"/>
<line x1="369" y1="319.5" x2="374.5" y2="319.5" stroke="#fff" stroke-width="1"/>
<line x1="156.5" y1="473.5" x2="461.5" y2="473.5" stroke="#fff" stroke-width="1"/>
<path d="M186.5 473.5 V476.5 H432.5 V473.5" stroke="#fff" fill="none" stroke-width="1"/>
<line x1="176.5" y1="473.5" x2="176.5" y2="491.5" stroke="#fff" stroke-width="1"/>
<line x1="441.5" y1="473.5" x2="441.5" y2="491.5" stroke="#fff" stroke-width="1"/>
<line x1="229.5" y1="458.5" x2="229.5" y2="473.5" stroke="#fff" stroke-width="1"/>
<line x1="389.5" y1="458.5" x2="389.5" y2="473.5" stroke="#fff" stroke-width="1"/>
<line x1="251.5" y1="458.5" x2="265.5" y2="473.5" stroke="#fff" stroke-width="1"/>
<line x1="366" y1="458.5" x2="352" y2="473.5" stroke="#fff" stroke-width="1"/>
<path d="M196.5 408.5 H176.5 L172.5 412 V436 L176.5 439.5 H196.5 M176.5 408.5 V439.5" stroke="#fff" fill="none" stroke-width="1"/>
<path d="M421.5 408.5 H443.5 V439.5 H421.5 M443.5 408.5 L446.5 411.5 H468 Q472.5 413 472.5 418 V430 Q472.5 435 468 436.5 H446.5 L443.5 439.5 M446.5 411.5 V436.5 M468.5 411.5 V436.5" stroke="#fff" fill="none" stroke-width="1"/>
<circle cx="244.5" cy="424.5" r="15.3" stroke="#fff" fill="none" stroke-width="1.7"/>
<circle cx="244" cy="424.5" r="12" stroke="#fff" fill="none" stroke-width="1"/>
<circle cx="221.5" cy="424" r="9.5" stroke="#fff" fill="none" stroke-width="1.7"/>
<rect x="220" y="422.5" width="3" height="3.0" stroke="#fff" fill="none"/>
<circle cx="374.5" cy="424.5" r="15.3" stroke="#fff" fill="none" stroke-width="1.7"/>
<circle cx="375" cy="424.5" r="12" stroke="#fff" fill="none" stroke-width="1"/>
<circle cx="397.5" cy="424" r="9.2" stroke="#fff" fill="none" stroke-width="1.7"/>
<ellipse cx="397.5" cy="424" rx="2" ry="1.5" stroke="#fff" fill="none"/>
<path d="M455.5 411.5 V423 L456.5 425 V436.5 M458.5 411.5 V423 L459.5 425 V436.5" stroke="#00f" fill="none" stroke-width="1"/>
<line x1="152" y1="424.5" x2="252" y2="424.5" stroke="#f00" stroke-width="1"/>
<line x1="262" y1="424.5" x2="282" y2="424.5" stroke="#f00" stroke-width="1"/>
<line x1="292.5" y1="424.5" x2="420.5" y2="424.5" stroke="#f00" stroke-width="1"/>
<line x1="432" y1="424.5" x2="473.5" y2="424.5" stroke="#f00" stroke-width="1"/>
<line x1="309.5" y1="327" x2="309.5" y2="378" stroke="#f00" stroke-width="1"/>
<line x1="309.5" y1="388" x2="309.5" y2="407.5" stroke="#f00" stroke-width="1"/>
<line x1="309.5" y1="418.5" x2="309.5" y2="518" stroke="#f00" stroke-width="1"/>
<line x1="221.5" y1="411" x2="221.5" y2="436" stroke="#f00" stroke-width="1"/>
<line x1="397.5" y1="411" x2="397.5" y2="436" stroke="#f00" stroke-width="1"/>
<line x1="244.5" y1="400.5" x2="244.5" y2="444" stroke="#f00" stroke-width="1"/>
<line x1="374.5" y1="400.5" x2="374.5" y2="444" stroke="#f00" stroke-width="1"/>
<line x1="154.0" y1="347.5" x2="182.5" y2="347.5" stroke="#f00" stroke-width="1"/>
<line x1="169.5" y1="338.5" x2="169.5" y2="360" stroke="#f00" stroke-width="1"/>
<line x1="154.0" y1="477.5" x2="183.0" y2="477.5" stroke="#f00" stroke-width="1"/>
<line x1="169.5" y1="468" x2="169.5" y2="489" stroke="#f00" stroke-width="1"/>
<line x1="434.0" y1="347.5" x2="462.5" y2="347.5" stroke="#f00" stroke-width="1"/>
<line x1="449.5" y1="338.5" x2="449.5" y2="360" stroke="#f00" stroke-width="1"/>
<line x1="434.0" y1="477.5" x2="463.0" y2="477.5" stroke="#f00" stroke-width="1"/>
<line x1="449.5" y1="468" x2="449.5" y2="489" stroke="#f00" stroke-width="1"/>
<circle cx="196.5" cy="483.5" r="6" stroke="#f00" fill="none" stroke-width="1.9"/>
<line x1="186.0" y1="483.5" x2="208.0" y2="483.5" stroke="#f00" stroke-width="1"/>
<line x1="196.5" y1="469" x2="196.5" y2="497" stroke="#f00" stroke-width="1"/>
<circle cx="421.5" cy="483.5" r="6" stroke="#f00" fill="none" stroke-width="1.9"/>
<line x1="411.0" y1="483.5" x2="433.0" y2="483.5" stroke="#f00" stroke-width="1"/>
<line x1="421.5" y1="469" x2="421.5" y2="497" stroke="#f00" stroke-width="1"/>
<text x="306" y="318" fill="#f00" font-size="4.5" text-anchor="start" font-weight="bold" textLength="6.5" lengthAdjust="spacingAndGlyphs">130</text>
<!--TABLE-->
<line x1="637.5" y1="381.5" x2="795.5" y2="381.5" stroke="#fff" stroke-width="1"/>
<line x1="637.5" y1="389.5" x2="795.5" y2="389.5" stroke="#fff" stroke-width="1"/>
<line x1="637.5" y1="397.5" x2="795.5" y2="397.5" stroke="#fff" stroke-width="1"/>
<line x1="637.5" y1="405.5" x2="795.5" y2="405.5" stroke="#fff" stroke-width="1"/>
<line x1="637.5" y1="413.5" x2="795.5" y2="413.5" stroke="#fff" stroke-width="1"/>
<line x1="637.5" y1="421.5" x2="795.5" y2="421.5" stroke="#fff" stroke-width="1"/>
<line x1="637.5" y1="429.5" x2="795.5" y2="429.5" stroke="#fff" stroke-width="1"/>
<line x1="637.5" y1="437.5" x2="795.5" y2="437.5" stroke="#fff" stroke-width="1"/>
<line x1="637.5" y1="445.5" x2="795.5" y2="445.5" stroke="#fff" stroke-width="1"/>
<line x1="637.5" y1="453.5" x2="795.5" y2="453.5" stroke="#fff" stroke-width="1"/>
<line x1="637.5" y1="461.5" x2="795.5" y2="461.5" stroke="#fff" stroke-width="1"/>
<line x1="637.5" y1="469.5" x2="795.5" y2="469.5" stroke="#fff" stroke-width="1"/>
<line x1="637.5" y1="477.5" x2="795.5" y2="477.5" stroke="#fff" stroke-width="1"/>
<line x1="637.5" y1="485.5" x2="795.5" y2="485.5" stroke="#fff" stroke-width="1"/>
<line x1="637.5" y1="381.5" x2="637.5" y2="485.5" stroke="#fff" stroke-width="1"/>
<line x1="648.5" y1="381.5" x2="648.5" y2="485.5" stroke="#fff" stroke-width="1"/>
<line x1="701.5" y1="381.5" x2="701.5" y2="485.5" stroke="#fff" stroke-width="1"/>
<line x1="714.5" y1="381.5" x2="714.5" y2="485.5" stroke="#fff" stroke-width="1"/>
<line x1="731.5" y1="381.5" x2="731.5" y2="485.5" stroke="#fff" stroke-width="1"/>
<text x="647.5" y="389.0" fill="#fff" font-size="6.5" text-anchor="end" font-weight="bold">12</text>
<text x="666.5" y="387.5" fill="#fff" font-size="6" text-anchor="middle" font-weight="bold">夹具体</text>
<text x="707.5" y="389.0" fill="#fff" font-size="6.5" text-anchor="middle" font-weight="bold">1</text>
<text x="716.5" y="388.7" fill="#fff" font-size="6.5" text-anchor="start" textLength="12" lengthAdjust="spacingAndGlyphs" font-weight="bold">45钢</text>
<text x="647.5" y="397.0" fill="#fff" font-size="6.5" text-anchor="end" font-weight="bold">11</text>
<text x="666.5" y="395.5" fill="#fff" font-size="6" text-anchor="middle" font-weight="bold">螺钉</text>
<text x="707.5" y="397.0" fill="#fff" font-size="6.5" text-anchor="middle" font-weight="bold">2</text>
<text x="716.5" y="396.7" fill="#fff" font-size="6.5" text-anchor="start" textLength="12" lengthAdjust="spacingAndGlyphs" font-weight="bold">45钢</text>
<text x="737" y="396.2" fill="#fff" font-size="6.5" text-anchor="start" textLength="55" lengthAdjust="spacingAndGlyphs" font-weight="bold">GB70-85-M20x35</text>
<text x="647.5" y="405.0" fill="#fff" font-size="6.5" text-anchor="end" font-weight="bold">10</text>
<text x="666.5" y="403.5" fill="#fff" font-size="6" text-anchor="middle" font-weight="bold">V形块</text>
<text x="707.5" y="405.0" fill="#fff" font-size="6.5" text-anchor="middle" font-weight="bold">1</text>
<text x="716.5" y="404.7" fill="#fff" font-size="6.5" text-anchor="start" textLength="12" lengthAdjust="spacingAndGlyphs" font-weight="bold">45钢</text>
<text x="737" y="404.2" fill="#fff" font-size="6.5" text-anchor="start" textLength="52" lengthAdjust="spacingAndGlyphs" font-weight="bold">活块 120x80x40-60</text>
<text x="647.5" y="413.0" fill="#fff" font-size="6.5" text-anchor="end" font-weight="bold">9</text>
<text x="666.5" y="411.5" fill="#fff" font-size="6" text-anchor="middle" font-weight="bold">垫块</text>
<text x="707.5" y="413.0" fill="#fff" font-size="6.5" text-anchor="middle" font-weight="bold">1</text>
<text x="716.5" y="412.7" fill="#fff" font-size="6.5" text-anchor="start" textLength="12" lengthAdjust="spacingAndGlyphs" font-weight="bold">45钢</text>
<text x="737" y="412.2" fill="#fff" font-size="6.5" text-anchor="start" textLength="40" lengthAdjust="spacingAndGlyphs" font-weight="bold">垫块 180x40x18</text>
<text x="647.5" y="421.0" fill="#fff" font-size="6.5" text-anchor="end" font-weight="bold">8</text>
<text x="666.5" y="419.5" fill="#fff" font-size="6" text-anchor="middle" font-weight="bold">螺钉</text>
<text x="707.5" y="421.0" fill="#fff" font-size="6.5" text-anchor="middle" font-weight="bold">1</text>
<text x="716.5" y="420.7" fill="#fff" font-size="6.5" text-anchor="start" textLength="12" lengthAdjust="spacingAndGlyphs" font-weight="bold">45钢</text>
<text x="737" y="420.2" fill="#fff" font-size="6.5" text-anchor="start" textLength="55" lengthAdjust="spacingAndGlyphs" font-weight="bold">GB70-85-M20x38</text>
<text x="647.5" y="429.0" fill="#fff" font-size="6.5" text-anchor="end" font-weight="bold">7</text>
<text x="666.5" y="427.5" fill="#fff" font-size="6" text-anchor="middle" font-weight="bold">螺钉</text>
<text x="707.5" y="429.0" fill="#fff" font-size="6.5" text-anchor="middle" font-weight="bold">1</text>
<text x="716.5" y="428.7" fill="#fff" font-size="6.5" text-anchor="start" textLength="12" lengthAdjust="spacingAndGlyphs" font-weight="bold">45钢</text>
<text x="737" y="428.2" fill="#fff" font-size="6.5" text-anchor="start" textLength="55" lengthAdjust="spacingAndGlyphs" font-weight="bold">GB70-85-M20x30</text>
<text x="647.5" y="437.0" fill="#fff" font-size="6.5" text-anchor="end" font-weight="bold">6</text>
<text x="666.5" y="435.5" fill="#fff" font-size="6" text-anchor="middle" font-weight="bold">螺杆</text>
<text x="707.5" y="437.0" fill="#fff" font-size="6.5" text-anchor="middle" font-weight="bold">1</text>
<text x="716.5" y="436.7" fill="#fff" font-size="6.5" text-anchor="start" textLength="12" lengthAdjust="spacingAndGlyphs" font-weight="bold">45钢</text>
<text x="737" y="436.2" fill="#fff" font-size="6.5" text-anchor="start" textLength="54" lengthAdjust="spacingAndGlyphs" font-weight="bold">螺杆 M-340x220-40</text>
<text x="647.5" y="445.0" fill="#fff" font-size="6.5" text-anchor="end" font-weight="bold">5</text>
<text x="666.5" y="443.5" fill="#fff" font-size="6" text-anchor="middle" font-weight="bold">滑座</text>
<text x="707.5" y="445.0" fill="#fff" font-size="6.5" text-anchor="middle" font-weight="bold">1</text>
<text x="716.5" y="444.7" fill="#fff" font-size="6.5" text-anchor="start" textLength="12" lengthAdjust="spacingAndGlyphs" font-weight="bold">45钢</text>
<text x="737" y="444.2" fill="#fff" font-size="6.5" text-anchor="start" textLength="32" lengthAdjust="spacingAndGlyphs" font-weight="bold">滑座 180x75</text>
<text x="647.5" y="453.0" fill="#fff" font-size="6.5" text-anchor="end" font-weight="bold">4</text>
<text x="666.5" y="451.5" fill="#fff" font-size="6" text-anchor="middle" font-weight="bold">V形块</text>
<text x="707.5" y="453.0" fill="#fff" font-size="6.5" text-anchor="middle" font-weight="bold">1</text>
<text x="716.5" y="452.7" fill="#fff" font-size="6.5" text-anchor="start" textLength="12" lengthAdjust="spacingAndGlyphs" font-weight="bold">45钢</text>
<text x="737" y="452.2" fill="#fff" font-size="6.5" text-anchor="start" textLength="50" lengthAdjust="spacingAndGlyphs" font-weight="bold">下模 块44x80x80-60</text>
<text x="647.5" y="461.0" fill="#fff" font-size="6.5" text-anchor="end" font-weight="bold">3</text>
<text x="666.5" y="459.5" fill="#fff" font-size="6" text-anchor="middle" font-weight="bold">钻模板</text>
<text x="707.5" y="461.0" fill="#fff" font-size="6.5" text-anchor="middle" font-weight="bold">1</text>
<text x="716.5" y="460.7" fill="#fff" font-size="6.5" text-anchor="start" textLength="12" lengthAdjust="spacingAndGlyphs" font-weight="bold">45钢</text>
<text x="737" y="460.2" fill="#fff" font-size="6.5" text-anchor="start" textLength="50" lengthAdjust="spacingAndGlyphs" font-weight="bold">钻模板 211x45 b=20</text>
<text x="647.5" y="469.0" fill="#fff" font-size="6.5" text-anchor="end" font-weight="bold">2</text>
<text x="666.5" y="467.5" fill="#fff" font-size="6" text-anchor="middle" font-weight="bold">螺钉</text>
<text x="707.5" y="469.0" fill="#fff" font-size="6.5" text-anchor="middle" font-weight="bold">1</text>
<text x="716.5" y="468.7" fill="#fff" font-size="6.5" text-anchor="start" textLength="12" lengthAdjust="spacingAndGlyphs" font-weight="bold">45钢</text>
<text x="737" y="468.2" fill="#fff" font-size="6.5" text-anchor="start" textLength="50" lengthAdjust="spacingAndGlyphs" font-weight="bold">GB70-85-M8x22</text>
<text x="647.5" y="477.0" fill="#fff" font-size="6.5" text-anchor="end" font-weight="bold">1</text>
<text x="666.5" y="475.5" fill="#fff" font-size="6" text-anchor="middle" font-weight="bold">钻套</text>
<text x="707.5" y="477.0" fill="#fff" font-size="6.5" text-anchor="middle" font-weight="bold">1</text>
<text x="716.5" y="476.7" fill="#fff" font-size="6.5" text-anchor="start" textLength="12" lengthAdjust="spacingAndGlyphs" font-weight="bold">45钢</text>
<text x="737" y="476.2" fill="#fff" font-size="6.5" text-anchor="start" textLength="56" lengthAdjust="spacingAndGlyphs" font-weight="bold">钻套 211 45 b 40x22N</text>
<text x="643" y="484.0" fill="#fff" font-size="5.5" text-anchor="middle" font-weight="bold">序号</text>
<text x="675" y="484.0" fill="#fff" font-size="5.5" text-anchor="middle" font-weight="bold">名称</text>
<text x="708" y="484.0" fill="#fff" font-size="5.5" text-anchor="middle" font-weight="bold">数量</text>
<text x="723" y="484.0" fill="#fff" font-size="5.5" text-anchor="middle" font-weight="bold">材料</text>
<text x="763.5" y="484.0" fill="#fff" font-size="5.5" text-anchor="middle" font-weight="bold">备注</text>
<line x1="637.5" y1="491.5" x2="707.5" y2="491.5" stroke="#fff" stroke-width="1"/>
<line x1="637.5" y1="497.5" x2="707.5" y2="497.5" stroke="#fff" stroke-width="1"/>
<line x1="637.5" y1="503.5" x2="707.5" y2="503.5" stroke="#fff" stroke-width="1"/>
<line x1="637.5" y1="509.5" x2="707.5" y2="509.5" stroke="#fff" stroke-width="1"/>
<line x1="637.5" y1="515.5" x2="707.5" y2="515.5" stroke="#fff" stroke-width="1"/>
<line x1="637.5" y1="521.5" x2="707.5" y2="521.5" stroke="#fff" stroke-width="1"/>
<line x1="637.5" y1="527.5" x2="707.5" y2="527.5" stroke="#fff" stroke-width="1"/>
<line x1="645.5" y1="485.5" x2="645.5" y2="509.5" stroke="#fff" stroke-width="1"/>
<line x1="654.5" y1="485.5" x2="654.5" y2="509.5" stroke="#fff" stroke-width="1"/>
<line x1="668.5" y1="485.5" x2="668.5" y2="509.5" stroke="#fff" stroke-width="1"/>
<line x1="682.5" y1="485.5" x2="682.5" y2="509.5" stroke="#fff" stroke-width="1"/>
<line x1="693.5" y1="485.5" x2="693.5" y2="509.5" stroke="#fff" stroke-width="1"/>
<line x1="647.5" y1="509.5" x2="647.5" y2="534.5" stroke="#fff" stroke-width="1"/>
<line x1="658.5" y1="509.5" x2="658.5" y2="534.5" stroke="#fff" stroke-width="1"/>
<line x1="672.5" y1="509.5" x2="672.5" y2="534.5" stroke="#fff" stroke-width="1"/>
<line x1="682.5" y1="509.5" x2="682.5" y2="534.5" stroke="#fff" stroke-width="1"/>
<line x1="693.5" y1="509.5" x2="693.5" y2="534.5" stroke="#fff" stroke-width="1"/>
<line x1="707.5" y1="485.5" x2="707.5" y2="534.5" stroke="#fff" stroke-width="1"/>
<line x1="751.5" y1="485.5" x2="751.5" y2="534.5" stroke="#fff" stroke-width="1"/>
<line x1="707.5" y1="508.5" x2="751.5" y2="508.5" stroke="#fff" stroke-width="1"/>
<line x1="707.5" y1="518.5" x2="751.5" y2="518.5" stroke="#fff" stroke-width="1"/>
<line x1="707.5" y1="526.5" x2="751.5" y2="526.5" stroke="#fff" stroke-width="1"/>
<line x1="730.5" y1="508.5" x2="730.5" y2="526.5" stroke="#fff" stroke-width="1"/>
<line x1="741.5" y1="508.5" x2="741.5" y2="526.5" stroke="#fff" stroke-width="1"/>
<line x1="713.5" y1="518.5" x2="713.5" y2="526.5" stroke="#fff" stroke-width="1"/>
<line x1="719.5" y1="518.5" x2="719.5" y2="526.5" stroke="#fff" stroke-width="1"/>
<line x1="725.5" y1="518.5" x2="725.5" y2="526.5" stroke="#fff" stroke-width="1"/>
<line x1="751.5" y1="500.5" x2="795.5" y2="500.5" stroke="#fff" stroke-width="1"/>
<line x1="751.5" y1="518.5" x2="795.5" y2="518.5" stroke="#fff" stroke-width="1"/>
<text x="638.5" y="508.8" fill="#fff" font-size="5" text-anchor="start" font-weight="bold" textLength="67" lengthAdjust="spacingAndGlyphs">标记处数 分区 更改文件号 签名 年月日</text>
<text x="638.5" y="515" fill="#fff" font-size="5" text-anchor="start" font-weight="bold">设计</text>
<text x="673" y="515" fill="#fff" font-size="5" text-anchor="start" font-weight="bold" textLength="11" lengthAdjust="spacingAndGlyphs">标准化</text>
<text x="638.5" y="527" fill="#fff" font-size="5" text-anchor="start" font-weight="bold">审核</text>
<text x="638.5" y="533.3" fill="#fff" font-size="5" text-anchor="start" font-weight="bold">工艺</text>
<text x="673.5" y="533.3" fill="#fff" font-size="5" text-anchor="start" font-weight="bold">批准</text>
<text x="718" y="498.5" fill="#fff" font-size="6" text-anchor="start" font-weight="bold" textLength="14" lengthAdjust="spacingAndGlyphs">钻夹具</text>
<text x="711" y="516.5" fill="#fff" font-size="5" text-anchor="start" font-weight="bold" textLength="16" lengthAdjust="spacingAndGlyphs">阶段标记</text>
<text x="732" y="516.5" fill="#fff" font-size="5" text-anchor="start" font-weight="bold" textLength="8" lengthAdjust="spacingAndGlyphs">重量</text>
<text x="743" y="516.5" fill="#fff" font-size="5" text-anchor="start" font-weight="bold" textLength="7" lengthAdjust="spacingAndGlyphs">比例</text>
<text x="759" y="510.5" fill="#fff" font-size="6" text-anchor="start" font-weight="bold" textLength="18" lengthAdjust="spacingAndGlyphs">钻床夹具</text>
<text x="501.5" y="422" fill="#fff" font-size="6.5" text-anchor="start" font-weight="bold" textLength="25" lengthAdjust="spacingAndGlyphs">技术要求:</text>
<text x="500" y="429.8" fill="#fff" font-size="6.5" text-anchor="start" font-weight="bold" textLength="51" lengthAdjust="spacingAndGlyphs">1.未注圆角R3-R5;</text>
<text x="504" y="437.5" fill="#fff" font-size="6.5" text-anchor="start" font-weight="bold" textLength="86" lengthAdjust="spacingAndGlyphs">2.铸件中要求无气孔、砂眼等缺陷</text>
<text x="505" y="445.5" fill="#fff" font-size="6.5" text-anchor="start" font-weight="bold" textLength="105" lengthAdjust="spacingAndGlyphs">3.装配图中各孔加工的尺寸及形位公差要求</text>
</svg>
</body></html>
